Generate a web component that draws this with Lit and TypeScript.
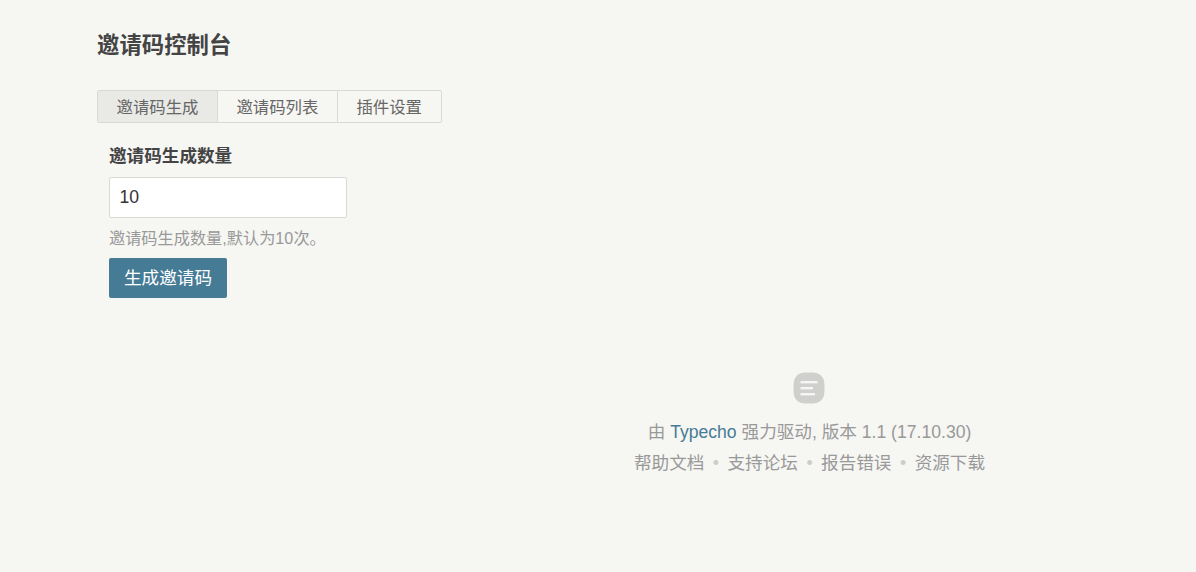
import { LitElement, html, css } from "lit";
import { customElement } from "lit/decorators.js";

@customElement("app-root")
export class AppRoot extends LitElement {
  static styles = css`
    :host {
      display: block;
      min-height: 572px;
      background: #f6f6f3;
      color: #444;
      font-family: "Liberation Sans", "Noto Sans CJK SC", sans-serif;
      box-sizing: border-box;
      padding: 31px 0 0 97px;
    }
    h2 {
      margin: 0;
      font-size: 22.4px;
      line-height: 30px;
      font-weight: 700;
      color: #444;
    }
    .tabs {
      display: inline-flex;
      margin-top: 29px;
      border: 1px solid #d9d9d6;
      border-radius: 2px;
      height: 33px;
      box-sizing: border-box;
    }
    .tab {
      padding: 0 18.5px;
      font-size: 16.4px;
      line-height: 33px;
      height: 31px;
      color: #666;
      border-right: 1px solid #d9d9d6;
    }
    .tab:last-child { border-right: 0; padding-right: 19.5px; }
    .tab.active { background: #e9e9e6; }
    form {
      display: flex;
      flex-direction: column;
      align-items: flex-start;
      padding: 21px 0 0 12px;
    }
    label {
      font-size: 17.6px;
      line-height: 24px;
      font-weight: 700;
    }
    .field {
      width: 238px;
      height: 41px;
      box-sizing: border-box;
      margin-top: 9px;
      border: 1px solid #d9d9d6;
      border-radius: 2px;
      background: #fff;
      padding: 0 9.5px;
      font: 17.6px/39px "Liberation Sans", sans-serif;
      color: #333;
    }
    .hint {
      margin-top: 8px;
      font-size: 16.2px;
      line-height: 24px;
      color: #999;
    }
    button {
      margin-top: 8px;
      width: 118px;
      height: 40px;
      border: 0;
      border-radius: 2px;
      background: #467b96;
      color: #fff;
      font: 17.6px/38px "Liberation Sans", "Noto Sans CJK SC", sans-serif;
      padding: 0;
    }
    footer {
      display: flex;
      flex-direction: column;
      align-items: center;
      margin: 74px 0 0 326px;
      color: #999;
      font-size: 17.6px;
      line-height: 31px;
    }
    footer svg { display: block; margin: 0 2px 13px 0; }
    a { color: #467b96; text-decoration: none; }
    .links { color: #999; }
    .dot { color: #ccc; margin: 0 8.5px; }
  `;

  render() {
    return html`
      <h2>邀请码控制台</h2>
      <div class="tabs">
        <div class="tab active">邀请码生成</div>
        <div class="tab">邀请码列表</div>
        <div class="tab">插件设置</div>
      </div>
      <form @submit=${(e: Event) => e.preventDefault()}>
        <label>邀请码生成数量</label>
        <div class="field">10</div>
        <div class="hint">邀请码生成数量,默认为10次。</div>
        <button type="button">生成邀请码</button>
      </form>
      <footer>
        <svg width="32" height="32" viewBox="0 0 32 32">
          <path d="M16 0.5C22 0.5 25 0.8 28 3.5 31 6.5 31.5 10 31.5 16S31 25.5 28 28.5C25 31.2 22 31.5 16 31.5S7 31.2 4 28.5C1 25.5 0.5 22 0.5 16S1 6.5 4 3.5C7 0.8 10 0.5 16 0.5Z" fill="#cfcfcd"/>
          <rect x="7.5" y="9" width="17" height="2.4" fill="#f6f6f3"/>
          <rect x="7.5" y="15" width="12.5" height="2.4" fill="#f6f6f3"/>
          <rect x="7.5" y="21" width="14.5" height="2.4" fill="#f6f6f3"/>
        </svg>
        <div>由 <a>Typecho</a> 强力驱动, 版本 1.1 (17.10.30)</div>
        <div class="links">帮助文档<span class="dot">•</span>支持论坛<span class="dot">•</span>报告错误<span class="dot">•</span>资源下载</div>
      </footer>
    `;
  }
}
